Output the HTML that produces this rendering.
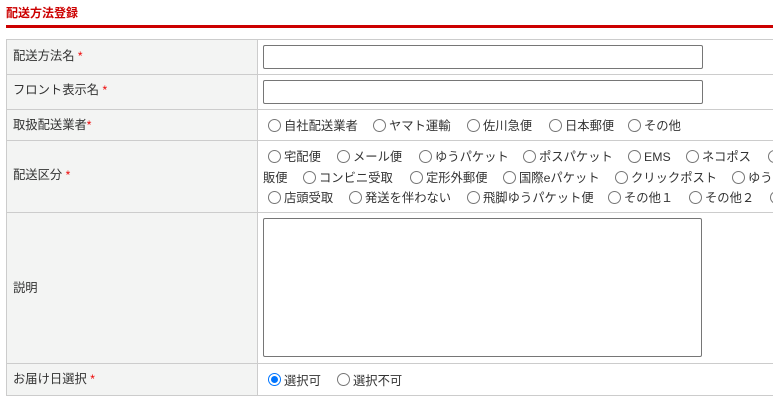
<!DOCTYPE html><html><head><meta charset="utf-8"><style>
*{margin:0;padding:0;box-sizing:border-box}
body{width:773px;height:401px;overflow:hidden;background:#fff;position:relative;font-family:"Liberation Sans","Noto Sans CJK JP",sans-serif;font-size:12.3px;color:#333}
.a{position:absolute;white-space:nowrap;line-height:16px}
.r{position:absolute;width:13px;height:13px;border:1px solid #767676;border-radius:50%;background:#fff}
.c{border-color:#0075ff}
.c:after{content:"";position:absolute;left:2px;top:2px;width:7px;height:7px;border-radius:50%;background:#0075ff}
.s{color:#e00;font-size:12px}
.row{position:absolute;left:6px;width:780px;border-top:1px solid #ccc}
.lab{position:absolute;left:6px;width:251px;background:#f3f4f3}
.in{position:absolute;left:263px;width:440px;border:1px solid #767676;border-radius:2px;background:#fff}
</style></head><body>
<div class="a" style="left:6px;top:5px;color:#c00;font-size:12px;font-weight:bold">配送方法登録</div>
<div style="position:absolute;left:6px;top:25px;width:767px;height:3px;background:#c00"></div>
<div class="lab" style="top:39px;height:357px"></div>
<div style="position:absolute;left:6px;top:39px;width:1px;height:357px;background:#ccc"></div>
<div style="position:absolute;left:257px;top:39px;width:1px;height:357px;background:#ccc"></div>
<div class="row" style="top:39px"></div><div class="row" style="top:74px"></div><div class="row" style="top:109px"></div><div class="row" style="top:140px"></div><div class="row" style="top:212px"></div><div class="row" style="top:363px"></div><div class="row" style="top:395px"></div>
<div class="a" style="left:13px;top:48px">配送方法名 <span class="s">*</span></div>
<div class="a" style="left:13px;top:82px">フロント表示名 <span class="s">*</span></div>
<div class="a" style="left:13px;top:117px">取扱配送業者<span class="s">*</span></div>
<div class="a" style="left:13px;top:167px">配送区分 <span class="s">*</span></div>
<div class="a" style="left:13px;top:280px">説明</div>
<div class="a" style="left:13px;top:371px">お届け日選択 <span class="s">*</span></div>
<div class="in" style="top:45px;height:24px"></div>
<div class="in" style="top:80px;height:24px"></div>
<div class="in" style="top:218px;height:139px;width:439px"></div>
<div class="r" style="left:268px;top:119px"></div><div class="a" style="left:284px;top:118px">自社配送業者</div>
<div class="r" style="left:373px;top:119px"></div><div class="a" style="left:389px;top:118px">ヤマト運輸</div>
<div class="r" style="left:467px;top:119px"></div><div class="a" style="left:483px;top:118px">佐川急便</div>
<div class="r" style="left:549px;top:119px"></div><div class="a" style="left:565px;top:118px">日本郵便</div>
<div class="r" style="left:628px;top:119px"></div><div class="a" style="left:644px;top:118px">その他</div>
<div class="r" style="left:268px;top:150px"></div><div class="a" style="left:284px;top:149px">宅配便</div>
<div class="r" style="left:337px;top:150px"></div><div class="a" style="left:353px;top:149px">メール便</div>
<div class="r" style="left:419px;top:150px"></div><div class="a" style="left:435px;top:149px">ゆうパケット</div>
<div class="r" style="left:523px;top:150px"></div><div class="a" style="left:539px;top:149px">ポスパケット</div>
<div class="r" style="left:628px;top:150px"></div><div class="a" style="left:644px;top:149px">EMS</div>
<div class="r" style="left:686px;top:150px"></div><div class="a" style="left:702px;top:149px">ネコポス</div>
<div class="r" style="left:768px;top:150px"></div>
<div class="a" style="left:263px;top:170px">販便</div>
<div class="r" style="left:303px;top:171px"></div><div class="a" style="left:319px;top:170px">コンビニ受取</div>
<div class="r" style="left:410px;top:171px"></div><div class="a" style="left:426px;top:170px">定形外郵便</div>
<div class="r" style="left:503px;top:171px"></div><div class="a" style="left:519px;top:170px">国際eパケット</div>
<div class="r" style="left:615px;top:171px"></div><div class="a" style="left:631px;top:170px">クリックポスト</div>
<div class="r" style="left:732px;top:171px"></div><div class="a" style="left:748px;top:170px">ゆう</div>
<div class="r" style="left:268px;top:191px"></div><div class="a" style="left:284px;top:190px">店頭受取</div>
<div class="r" style="left:349px;top:191px"></div><div class="a" style="left:365px;top:190px">発送を伴わない</div>
<div class="r" style="left:467px;top:191px"></div><div class="a" style="left:483px;top:190px">飛脚ゆうパケット便</div>
<div class="r" style="left:608px;top:191px"></div><div class="a" style="left:624px;top:190px">その他１</div>
<div class="r" style="left:689px;top:191px"></div><div class="a" style="left:705px;top:190px">その他２</div>
<div class="r" style="left:770px;top:191px"></div>
<div class="r c" style="left:268px;top:373px"></div><div class="a" style="left:284px;top:373px">選択可</div>
<div class="r" style="left:337px;top:373px"></div><div class="a" style="left:353px;top:373px">選択不可</div>
</body></html>
